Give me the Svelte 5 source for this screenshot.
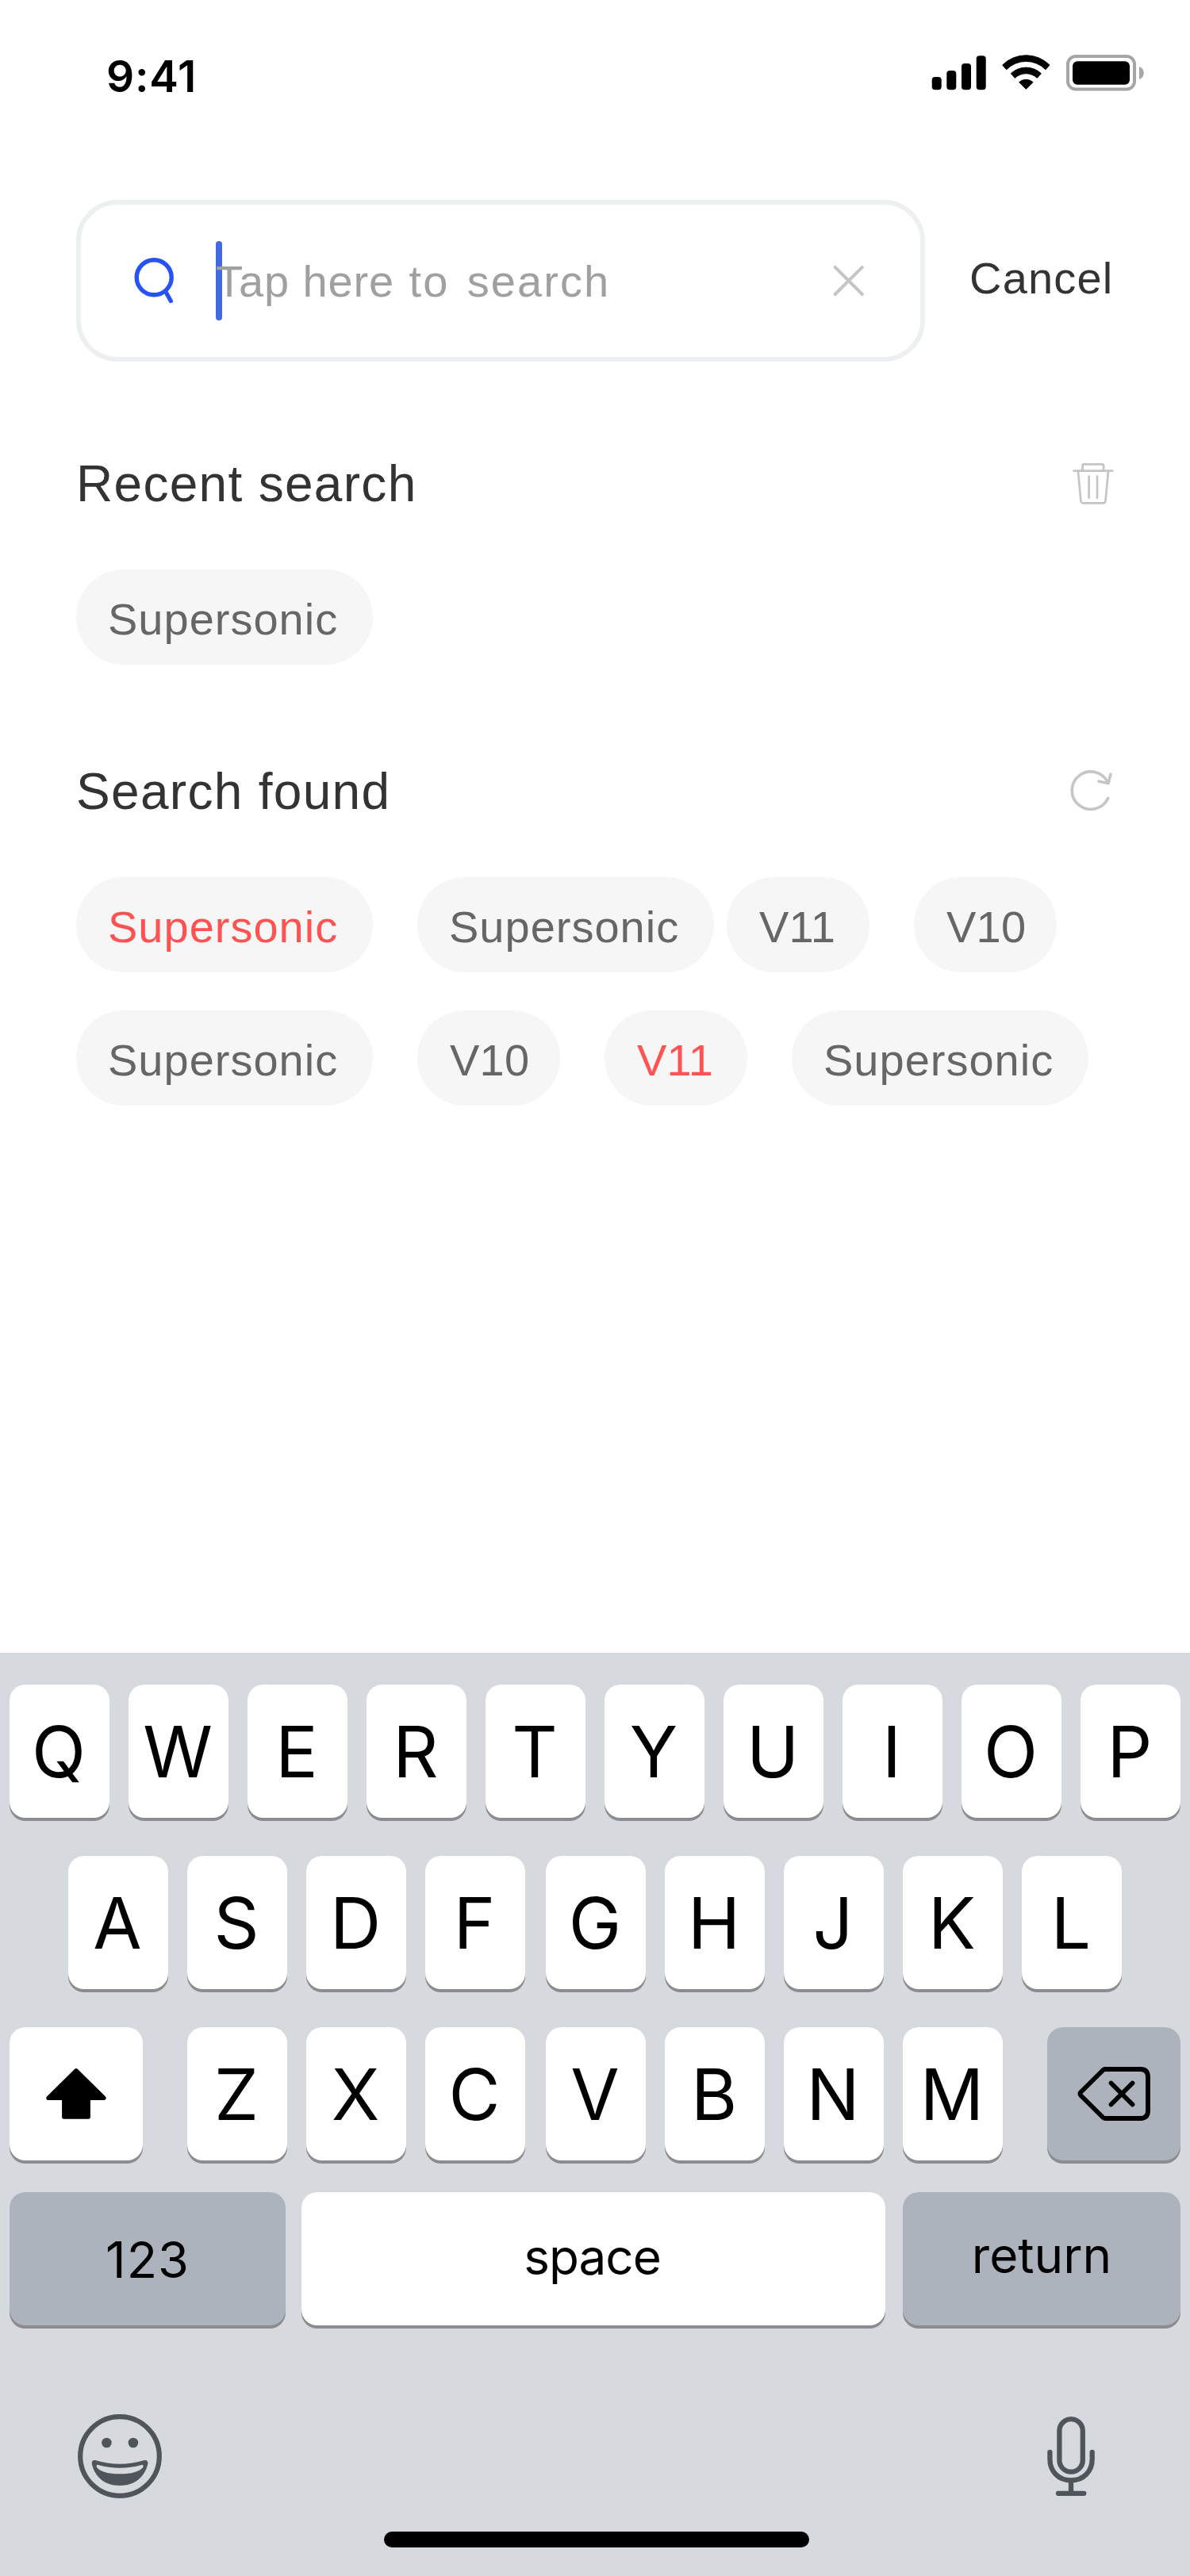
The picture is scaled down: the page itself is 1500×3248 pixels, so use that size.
<script>
  const found = [
    [
      { label: 'Supersonic', hot: true },
      { label: 'Supersonic' },
      { label: 'V11', tight: true },
      { label: 'V10' }
    ],
    [
      { label: 'Supersonic' },
      { label: 'V10' },
      { label: 'V11', hot: true },
      { label: 'Supersonic' }
    ]
  ];
  const topKeys = [...'QWERTYUIOP'];
  const homeLeft = [...'ASDF'];
  const homeRight = [...'GHJKL'];
  const lowLeft = [...'ZXC'];
  const lowRight = [...'VBNM'];
</script>

{#snippet chip(item)}
  <button class="chip" class:short={item.label.length < 4} class:hot={item.hot} class:tight={item.tight}>{item.label}</button>
{/snippet}

{#snippet keys(list)}
  <div class="keys">
    {#each list as k}
      <button class="key letter">{k}</button>
    {/each}
  </div>
{/snippet}

<div class="screen">
  <header class="status">
    <span class="time">9:41</span>
    <svg class="indicators" width="268" height="48" viewBox="0 0 268 48">
      <rect x="0.7" y="29" width="12" height="16.3" rx="4" />
      <rect x="19.3" y="21" width="12" height="24.3" rx="4" />
      <rect x="38" y="12" width="12" height="33.3" rx="4" />
      <rect x="56.7" y="2.3" width="12" height="43" rx="4" />
      <g transform="translate(89 1) scale(.3333)" stroke="#000" stroke-width="3" stroke-linejoin="round">
        <path d="M2 39A126 126 0 0 1 180 39L165 56A104 104 0 0 0 17 56Z" />
        <path d="M34 71A83 83 0 0 1 148 71L133 88A61 61 0 0 0 49 88Z" />
        <path d="M65 104A39 39 0 0 1 117 104L91 130Z" />
      </g>
      <rect x="172" y="3" width="84" height="41.6" rx="10" fill="none" stroke="#a6a6a6" stroke-width="4" />
      <rect x="178" y="9.3" width="72" height="29.4" rx="6" />
      <path d="M262 16C266 17.5 267.7 20.5 267.7 24S266 30.5 262 32Z" fill="#a6a6a6" />
    </svg>
  </header>

  <div class="search-row">
    <div class="search">
      <svg class="lens" width="56" height="64" viewBox="0 0 56 64" fill="none" stroke="#2752f5" stroke-width="5.4" stroke-linecap="round">
        <circle cx="26.2" cy="27.8" r="22" />
        <path d="M41.5 47L47.3 57.5" />
      </svg>
      <div class="field"><span class="caret"></span><span class="placeholder">Tap here <span class="loose">to search</span></span></div>
      <svg class="clear" width="40" height="40" viewBox="0 0 40 40" stroke="#c4c5c6" stroke-width="4" stroke-linecap="round">
        <path d="M2.6 2.8L36.8 37M36.8 2.8L2.6 37" />
      </svg>
    </div>
    <button class="cancel">Cancel</button>
  </div>

  <section class="group recent">
    <div class="head">
      <h2>Recent search</h2>
      <svg width="52" height="52" viewBox="0 0 52 52" fill="none" stroke="#c4c5c6" stroke-width="2.7" stroke-linecap="round" stroke-linejoin="round">
        <path d="M1.4 9.7H50.3M12.6 9V3.2Q12.6 1.4 14.5 1.4H37.2Q39.1 1.4 39.1 3.2V9M7 10.5L10.4 47.5Q10.7 50.3 13.2 50.3H38.6Q41.2 50.3 41.5 47.5L45 10.5M20.6 16.5V43.7M31 16.5V43.7" />
      </svg>
    </div>
    <div class="chips">{@render chip({ label: 'Supersonic' })}</div>
  </section>

  <section class="group">
    <div class="head found">
      <h2>Search found</h2>
      <svg width="56" height="52" viewBox="0 0 56 52" fill="none" stroke="#c4c5c6" stroke-width="3.6" stroke-linecap="round" stroke-linejoin="round">
        <path d="M47.5 36.5A23.7 23.7 0 1 1 47.7 17.3M36.2 15.2L48.2 17.7L50.9 6.2" />
      </svg>
    </div>
    {#each found as row}
      <div class="chips">
        {#each row as item}{@render chip(item)}{/each}
      </div>
    {/each}
  </section>

  <div class="keyboard">
    <div class="krow">{@render keys(topKeys)}</div>
    <div class="krow home">{@render keys(homeLeft)}{@render keys(homeRight)}</div>
    <div class="krow lower">
      <button class="key wide" aria-label="shift">
        <svg width="78" height="66" viewBox="0 0 78 66" stroke="#000" stroke-width="5" stroke-linejoin="round">
          <path d="M39 3.6L74.2 38.4H54.4V62.2H23.6V38.4H3.8Z" />
        </svg>
      </button>
      <div class="mid">{@render keys(lowLeft)}{@render keys(lowRight)}</div>
      <button class="key wide gray" aria-label="delete">
        <svg width="94" height="70" viewBox="0 0 94 70" fill="none" stroke="#000" stroke-width="5.8" stroke-linecap="round" stroke-linejoin="round">
          <path d="M36 4H80.5Q90 4 90 14V56Q90 66 80.5 66H36Q34.5 66 33 64.5L5.5 37.2Q3.5 35 5.5 32.8L33 5.5Q34.5 4 36 4ZM43.5 21.5L70.5 48.5M70.5 21.5L43.5 48.5" />
        </svg>
      </button>
    </div>
    <div class="krow bottom">
      <button class="key gray numbers">123</button>
      <button class="key space">space</button>
      <button class="key gray return">return</button>
    </div>
    <div class="extras">
      <svg width="106" height="106" viewBox="0 0 106 106">
        <circle cx="53" cy="53" r="49.8" fill="none" stroke="#50555c" stroke-width="6.2" />
        <circle cx="36.4" cy="36" r="6.3" fill="#50555c" />
        <circle cx="69.9" cy="36" r="6.3" fill="#50555c" />
        <path fill="#50555c" fill-rule="evenodd" d="M22 58Q53 67.4 84 58Q89 57.5 88.4 62.5C84.5 79 72 90 53 90S21.5 79 17.8 62.5Q17.2 57.5 22 58ZM26 63.9Q53 71.5 80.3 63.9Q83.4 63.4 82.3 67Q75 75.3 53 75.3T23.9 67Q22.8 63.4 26 63.9Z" />
      </svg>
      <svg width="60" height="102" viewBox="0 0 60 102" fill="none" stroke="#50555c" stroke-width="6.3" stroke-linecap="round">
        <rect x="15.4" y="4.2" width="29.4" height="66.5" rx="14.7" />
        <path d="M3.4 46V54.5C3.4 70 14 81.5 30 81.5S56.7 70 56.7 54.5V46M30 82V96M14 97.8H46.3" />
      </svg>
    </div>
    <div class="indicator"></div>
  </div>
</div>

<style>
  :global(body) { margin: 0; background: #fff; }
  .screen {
    width: 1500px;
    height: 3248px;
    display: flex;
    flex-direction: column;
    background: #fff;
    font-family: "Liberation Sans", Arial, sans-serif;
    overflow: hidden;
  }
  button {
    border: 0;
    margin: 0;
    padding: 0;
    font: inherit;
    color: inherit;
    background: none;
    box-sizing: border-box;
  }
  svg { display: block; flex: none; }

  .status {
    box-sizing: border-box;
    height: 252px;
    padding: 68px 58px 0 134px;
    display: flex;
    justify-content: space-between;
    align-items: flex-start;
  }
  .time {
    font: 600 55px/56px Inter, sans-serif;
    letter-spacing: 0.8px;
    color: #000;
  }

  .search-row { display: flex; height: 204px; padding-left: 96px; }
  .search {
    box-sizing: border-box;
    width: 1070px;
    height: 204px;
    border: 6px solid #ecf0f0;
    border-radius: 52px;
    display: flex;
    align-items: center;
    padding: 0 70px 0 66px;
  }
  .lens { margin-right: 48px; }
  .field { position: relative; flex: 1; display: flex; align-items: center; height: 100px; }
  .caret {
    position: absolute;
    left: 0;
    top: 0;
    width: 8px;
    height: 100px;
    border-radius: 4px;
    background: #4169e1;
  }
  .placeholder {
    position: relative;
    font-size: 56px;
    letter-spacing: 0.9px;
    color: #a0a0a0;
    white-space: pre;
  }
  .loose { margin-left: 2px; letter-spacing: 2.1px; word-spacing: 4.5px; }
  .cancel {
    height: 196px;
    margin-left: 56px;
    font-size: 56px;
    letter-spacing: 1.2px;
    color: #333;
  }

  .group { padding-left: 96px; }
  .recent { margin: 118px 0 124px; }
  .head {
    display: flex;
    align-items: center;
    justify-content: space-between;
    height: 72px;
    padding-right: 96px;
    margin-bottom: 72px;
  }
  .head.found { padding-right: 95px; }
  .found svg { margin-bottom: 4px; }
  h2 {
    margin: 0;
    font-size: 64px;
    line-height: 72px;
    font-weight: 400;
    letter-spacing: 1.3px;
    color: #333;
  }
  .chips { display: flex; gap: 56px; margin-bottom: 48px; }
  .recent .chips { margin-bottom: 0; }
  .chip {
    width: 374px;
    height: 120px;
    padding: 5px 0 0 40px;
    border-radius: 60px;
    background: #f6f6f6;
    font-size: 56px;
    line-height: 115px;
    letter-spacing: 1px;
    text-align: left;
    color: #666;
  }
  .short { width: 180px; padding-left: 41px; letter-spacing: 0.2px; }
  .hot { color: #ff5353; }
  .tight { margin-left: -40px; }

  .keyboard {
    box-sizing: border-box;
    height: 1164px;
    margin-top: auto;
    padding: 40px 12px 0;
    background: #d6d9de;
    font-family: Inter, sans-serif;
    color: #000;
  }
  .krow { display: flex; height: 168px; margin-bottom: 48px; }
  .home { justify-content: flex-start; gap: 26px; padding-left: 74px; }
  .lower { justify-content: space-between; margin-bottom: 40px; }
  .mid { display: flex; gap: 26px; }
  .keys { display: flex; gap: 24px; }
  .key {
    height: 168px;
    display: flex;
    align-items: center;
    justify-content: center;
    border-radius: 20px;
    background: #fff;
    box-shadow: 0 4px 0 #8a8c90;
    font-size: 64px;
  }
  .letter { width: 126px; padding-right: 2px; font-size: 89px; }
  .wide { width: 168px; }
  .gray { background: #adb3bd; }
  .bottom { margin-bottom: 0; }
  .numbers { width: 348px; font-size: 63px; padding-top: 2px; letter-spacing: 1px; }
  .space { width: 736px; margin: 0 22px 0 20px; font-size: 62px; padding: 0 3px 6px 0; letter-spacing: -1px; }
  .return { width: 350px; font-size: 62px; padding-bottom: 9px; }
  .extras {
    display: flex;
    justify-content: space-between;
    align-items: center;
    margin-top: 112px;
    padding: 0 108px 0 86px;
  }
  .indicator {
    width: 536px;
    height: 20px;
    margin: 42px 0 0 472px;
    border-radius: 10px;
    background: #000;
  }
</style>
